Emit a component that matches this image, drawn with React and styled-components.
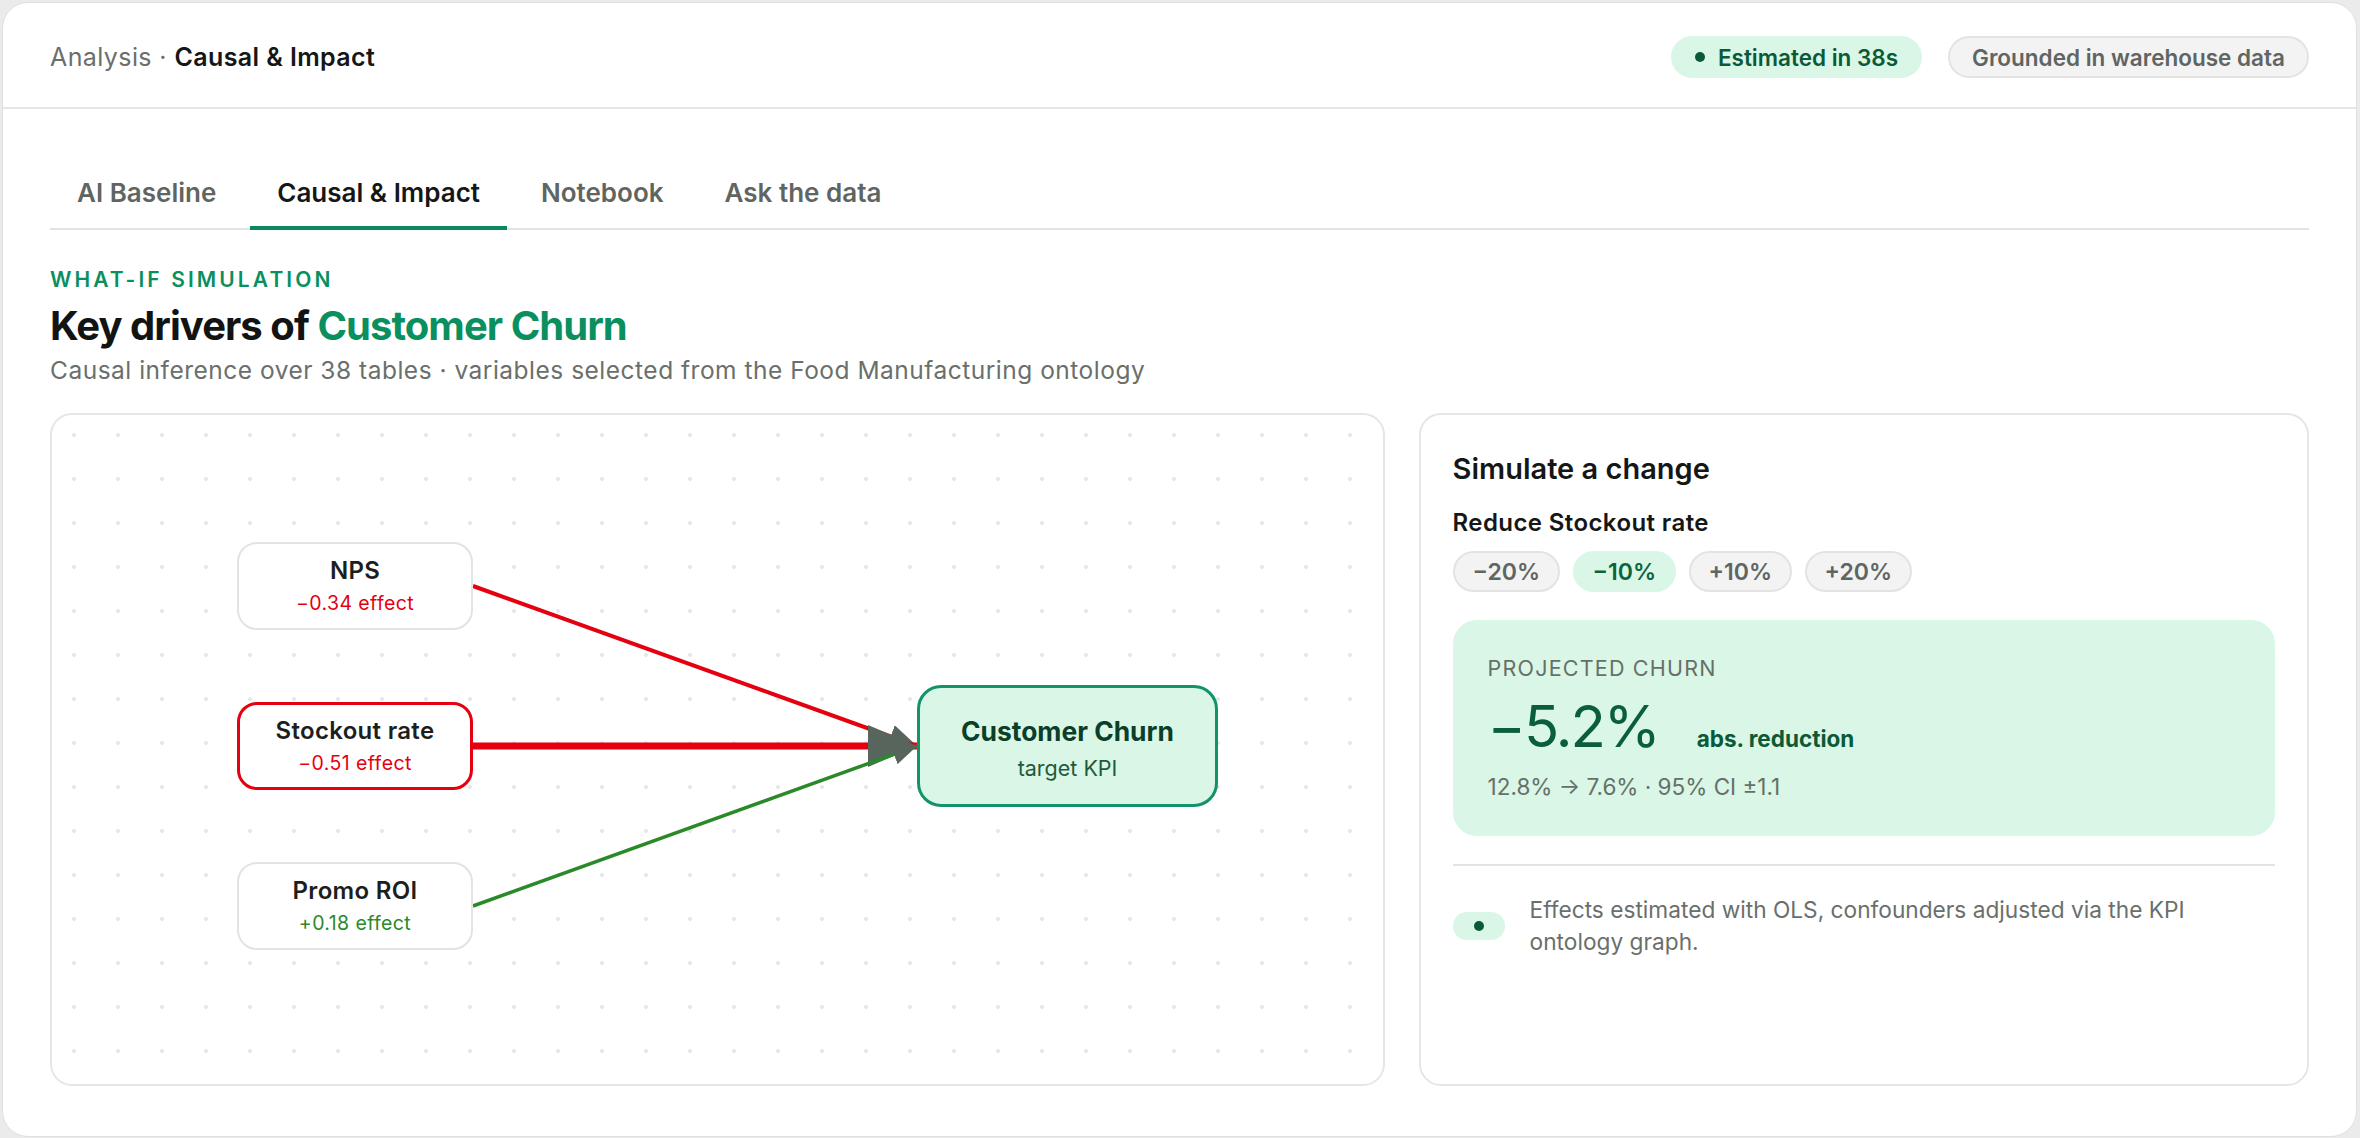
import React, { useState } from "react";
import styled, { createGlobalStyle } from "styled-components";

const GlobalStyle = createGlobalStyle`
  * { box-sizing: border-box; }
  html, body { margin: 0; padding: 0; height: 100%; }
  body {
    background: #ebebeb;
    font-family: Inter, "Noto Sans", "Liberation Sans", sans-serif;
    color: #1c1e1d;
    -webkit-font-smoothing: antialiased;
  }
`;

const GREEN = "#0a8f5f";
const DARK_GREEN = "#0b5a37";
const MINT = "#d9f6e6";
const RED = "#e5000f";
const LEAF = "#2a8a2a";
const MUTED = "#6a6f6c";

const Shell = styled.div`
  margin: 2px 3px 1px 2px;
  height: calc(100vh - 3px);
  background: #fff;
  border: 1px solid #e0e0e0;
  border-radius: 26px;
  display: flex;
  flex-direction: column;
  overflow: hidden;
`;

const TopBar = styled.header`
  height: 106px;
  flex: none;
  display: flex;
  align-items: center;
  justify-content: space-between;
  padding: 4px 47px 0;
  border-bottom: 2px solid #e6e6e6;
`;

const Crumbs = styled.div`
  font-size: 25px;
  letter-spacing: 0.4px;
  color: ${MUTED};
  b { color: #151716; font-weight: 600; }
`;

const Badges = styled.div`
  display: flex;
  gap: 26px;
`;

const Badge = styled.span`
  height: 42px;
  display: inline-flex;
  align-items: center;
  gap: 13px;
  padding: 0 22px;
  border-radius: 21px;
  font-size: 22.5px;
  font-weight: 600;
  background: ${(p) => (p.$tone === "mint" ? MINT : "#f2f3f2")};
  color: ${(p) => (p.$tone === "mint" ? DARK_GREEN : "#5f6562")};
  border: 2px solid ${(p) => (p.$tone === "mint" ? MINT : "#e2e3e2")};
`;

const Dot = styled.i`
  width: 10px;
  height: 10px;
  border-radius: 50%;
  background: ${DARK_GREEN};
  flex: none;
`;

const Body = styled.main`
  flex: 1;
  display: flex;
  flex-direction: column;
  padding: 58px 47px 50px;
  min-height: 0;
`;

const Tabs = styled.nav`
  display: flex;
  gap: 7px;
  border-bottom: 2px solid #e3e3e3;
`;

const Tab = styled.button`
  font: inherit;
  background: none;
  border: 0;
  padding: 10px 27px 17px;
  margin-bottom: -2px;
  font-size: 26px;
  line-height: 32px;
  font-weight: 600;
  color: ${(p) => (p.$active ? "#151716" : "#5f6662")};
  border-bottom: 4px solid ${(p) => (p.$active ? "#0a8a5c" : "transparent")};
  cursor: pointer;
`;

const Eyebrow = styled.div`
  margin-top: 38px;
  font-size: 21px;
  line-height: 24px;
  font-weight: 600;
  letter-spacing: 3.1px;
  color: ${GREEN};
`;

const Title = styled.h1`
  margin: 10px 0 0;
  font-size: 40px;
  line-height: 48px;
  font-weight: 700;
  letter-spacing: -0.95px;
  color: #121413;
  span { color: ${GREEN}; }
`;

const Subtitle = styled.p`
  margin: 4px 0 0;
  font-size: 24.5px;
  line-height: 32px;
  letter-spacing: 0.5px;
  color: ${MUTED};
`;

const Panels = styled.section`
  margin-top: 27px;
  flex: 1;
  min-height: 0;
  display: grid;
  grid-template-columns: 1334fr 890fr;
  gap: 34px;
`;

const Canvas = styled.div`
  position: relative;
  border: 2px solid #e6e6e6;
  border-radius: 22px;
  background-color: #fff;
  background-image: radial-gradient(circle, #e7e7e7 1.6px, transparent 2.2px);
  background-size: 44px 44px;
  background-position: 0 -2px;
  overflow: hidden;
`;

const Edges = styled.svg`
  position: absolute;
  inset: 0;
  width: 100%;
  height: 100%;
`;

const Node = styled.div`
  position: absolute;
  width: 236px;
  height: 88px;
  display: flex;
  flex-direction: column;
  align-items: center;
  justify-content: center;
  gap: 6px;
  background: #fff;
  border: ${(p) => (p.$hot ? `3px solid ${RED}` : "2px solid #e3e3e3")};
  border-radius: 20px;
`;

const NodeName = styled.div`
  font-size: 24px;
  line-height: 28px;
  font-weight: 600;
  color: #1d1f1e;
  letter-spacing: 0.3px;
`;

const NodeEffect = styled.div`
  font-size: 19.5px;
  line-height: 24px;
  letter-spacing: 0.4px;
  color: ${(p) => (p.$up ? LEAF : RED)};
`;

const Target = styled.div`
  position: absolute;
  width: 301px;
  height: 122px;
  display: flex;
  flex-direction: column;
  align-items: center;
  justify-content: center;
  gap: 9px;
  background: ${MINT};
  border: 3px solid #12936a;
  border-radius: 24px;
`;

const TargetName = styled.div`
  font-size: 26.4px;
  line-height: 30px;
  font-weight: 700;
  color: #0b3f29;
`;

const TargetSub = styled.div`
  font-size: 21.5px;
  line-height: 26px;
  color: #1f5a3e;
  margin-bottom: -4px;
`;

const Side = styled.aside`
  border: 2px solid #e6e6e6;
  border-radius: 22px;
  padding: 36px 32px 32px;
  display: flex;
  flex-direction: column;
`;

const SideTitle = styled.h2`
  margin: 0;
  font-size: 29px;
  line-height: 36px;
  font-weight: 600;
  color: #151716;
`;

const Label = styled.div`
  margin-top: 21px;
  font-size: 24px;
  line-height: 30px;
  letter-spacing: 0.4px;
  font-weight: 600;
  color: #151716;
`;

const Chips = styled.div`
  margin-top: 13px;
  display: flex;
  gap: 12.5px;
`;

const Chip = styled.button`
  font: inherit;
  height: 41px;
  padding: 0 18px;
  border-radius: 21px;
  font-size: 23px;
  font-weight: 600;
  cursor: pointer;
  background: ${(p) => (p.$on ? MINT : "#f2f3f2")};
  color: ${(p) => (p.$on ? "#0b6440" : "#5f6562")};
  border: 2px solid ${(p) => (p.$on ? MINT : "#e2e3e2")};
`;

const Result = styled.div`
  margin-top: 28px;
  background: ${MINT};
  border-radius: 24px;
  padding: 35px;
`;

const ResultLabel = styled.div`
  font-size: 21.5px;
  line-height: 26px;
  letter-spacing: 1.2px;
  color: #667068;
`;

const ResultRow = styled.div`
  margin-top: 12px;
  display: flex;
  align-items: baseline;
  gap: 38px;
`;

const Big = styled.div`
  font-size: 58px;
  line-height: 66px;
  font-weight: 400;
  letter-spacing: -2px;
  color: #0b5e3a;
`;

const BigNote = styled.div`
  font-size: 22.5px;
  font-weight: 700;
  color: ${DARK_GREEN};
`;

const ResultMeta = styled.div`
  margin-top: 14px;
  font-size: 22.5px;
  line-height: 28px;
  color: #667068;
`;

const Rule = styled.hr`
  margin: 28px 0 0;
  border: 0;
  border-top: 2px solid #e3e3e3;
`;

const Note = styled.div`
  margin-top: 28px;
  display: flex;
  align-items: center;
  gap: 25px;
`;

const NotePill = styled.span`
  width: 52px;
  height: 28px;
  flex: none;
  border-radius: 14px;
  background: ${MINT};
  display: flex;
  align-items: center;
  justify-content: center;
`;

const NoteText = styled.p`
  margin: 0;
  font-size: 22.7px;
  line-height: 32px;
  color: ${MUTED};
`;

const drivers = [
  { name: "NPS", effect: "−0.34 effect", y: 127, width: 4 },
  { name: "Stockout rate", effect: "−0.51 effect", y: 287, width: 7, hot: true },
  { name: "Promo ROI", effect: "+0.18 effect", y: 447, width: 3.5, up: true },
];

const NODE_X = 185;
const NODE_W = 236;
const TARGET = { x: 865, y: 270, h: 122 };

function Graph() {
  const tx = TARGET.x;
  const ty = TARGET.y + TARGET.h / 2;
  return (
    <Canvas>
      <Edges>
        <defs>
          <marker
            id="head"
            viewBox="0 0 7 6"
            markerWidth="7"
            markerHeight="6"
            refX="7"
            refY="3"
            orient="auto"
          >
            <path d="M0,0 L7,3 L0,6 Z" fill="#58655d" />
          </marker>
        </defs>
        {drivers.map((d) => (
          <line
            key={d.name}
            x1={NODE_X + NODE_W}
            y1={d.y + 44}
            x2={tx}
            y2={ty}
            stroke={d.up ? LEAF : RED}
            strokeWidth={d.width}
            markerEnd="url(#head)"
          />
        ))}
      </Edges>
      {drivers.map((d) => (
        <Node key={d.name} $hot={d.hot} style={{ left: NODE_X, top: d.y }}>
          <NodeName>{d.name}</NodeName>
          <NodeEffect $up={d.up}>{d.effect}</NodeEffect>
        </Node>
      ))}
      <Target style={{ left: TARGET.x, top: TARGET.y }}>
        <TargetName>Customer Churn</TargetName>
        <TargetSub>target KPI</TargetSub>
      </Target>
    </Canvas>
  );
}

const tabs = ["AI Baseline", "Causal & Impact", "Notebook", "Ask the data"];
const steps = ["−20%", "−10%", "+10%", "+20%"];

export default function App() {
  const [tab, setTab] = useState(1);
  const [step, setStep] = useState(1);
  return (
    <>
      <GlobalStyle />
      <Shell>
        <TopBar>
          <Crumbs>
            Analysis · <b>Causal &amp; Impact</b>
          </Crumbs>
          <Badges>
            <Badge $tone="mint">
              <Dot />
              Estimated in 38s
            </Badge>
            <Badge>Grounded in warehouse data</Badge>
          </Badges>
        </TopBar>
        <Body>
          <Tabs>
            {tabs.map((t, i) => (
              <Tab key={t} $active={i === tab} onClick={() => setTab(i)}>
                {t}
              </Tab>
            ))}
          </Tabs>
          <Eyebrow>WHAT-IF SIMULATION</Eyebrow>
          <Title>
            Key drivers of <span>Customer Churn</span>
          </Title>
          <Subtitle>
            Causal inference over 38 tables · variables selected from the Food
            Manufacturing ontology
          </Subtitle>
          <Panels>
            <Graph />
            <Side>
              <SideTitle>Simulate a change</SideTitle>
              <Label>Reduce Stockout rate</Label>
              <Chips>
                {steps.map((s, i) => (
                  <Chip key={s} $on={i === step} onClick={() => setStep(i)}>
                    {s}
                  </Chip>
                ))}
              </Chips>
              <Result>
                <ResultLabel>PROJECTED CHURN</ResultLabel>
                <ResultRow>
                  <Big>−5.2%</Big>
                  <BigNote>abs. reduction</BigNote>
                </ResultRow>
                <ResultMeta>12.8% → 7.6% · 95% CI ±1.1</ResultMeta>
              </Result>
              <Rule />
              <Note>
                <NotePill>
                  <Dot />
                </NotePill>
                <NoteText>
                  Effects estimated with OLS, confounders adjusted via the KPI
                  ontology graph.
                </NoteText>
              </Note>
            </Side>
          </Panels>
        </Body>
      </Shell>
    </>
  );
}
